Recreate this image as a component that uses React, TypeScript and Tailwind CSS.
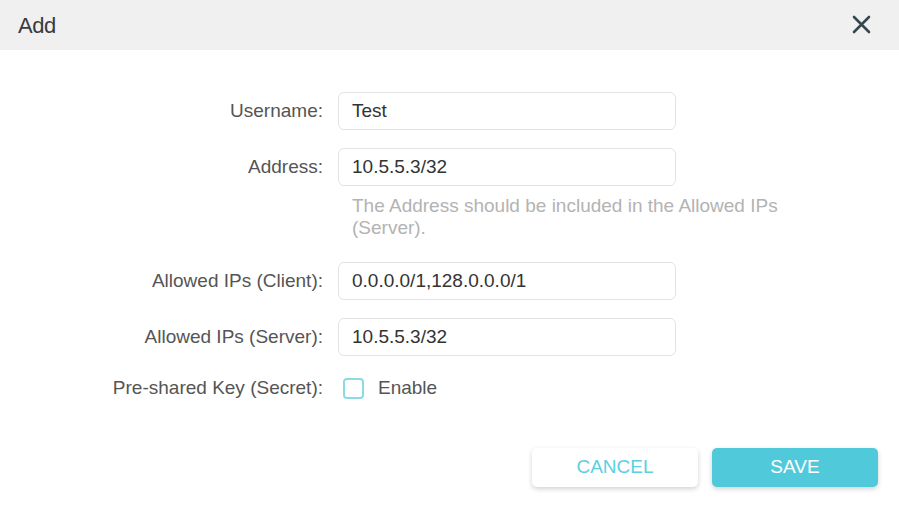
import React from "react";

const font = { fontFamily: '"Liberation Sans", Arial, sans-serif' };

function Row({ label, value }: { label: string; value: string }) {
  return (
    <div className="flex items-center h-[38px]">
      <div className="w-[323px] text-right text-[19px] text-[#555]">{label}</div>
      <div className="ml-[15px] w-[338px] h-[38px] border border-[#e3e3e3] rounded-[6px] flex items-center pl-[13px] text-[19px] text-[#333] bg-white">
        {value}
      </div>
    </div>
  );
}

export default function App() {
  return (
    <div className="w-[899px] h-[506px] bg-white overflow-hidden" style={font}>
      <div className="h-[50px] bg-[#f0f0f0] flex items-center justify-between pl-[18px] pr-[28px]">
        <span className="text-[22px] text-[#3a3a3a] tracking-[-0.5px]">Add</span>
        <svg width="19" height="19" viewBox="0 0 19 19" className="mt-[-1px]">
          <path d="M2 2 L17 17 M17 2 L2 17" stroke="#37474f" strokeWidth="2.6" strokeLinecap="round" />
        </svg>
      </div>
      <div className="pt-[42px] flex flex-col">
        <Row label="Username:" value="Test" />
        <div className="mt-[18px]">
          <Row label="Address:" value="10.5.5.3/32" />
        </div>
        <div className="ml-[352px] mt-[9px] w-[460px] text-[19px] leading-[22px] text-[#b3b3b3]">
          The Address should be included in the Allowed IPs (Server).
        </div>
        <div className="mt-[23px]">
          <Row label="Allowed IPs (Client):" value="0.0.0.0/1,128.0.0.0/1" />
        </div>
        <div className="mt-[18px]">
          <Row label="Allowed IPs (Server):" value="10.5.5.3/32" />
        </div>
        <div className="mt-[18px] flex items-center h-[28px]">
          <div className="w-[323px] text-right text-[19px] text-[#555]">Pre-shared Key (Secret):</div>
          <div className="ml-[20px] w-[21px] h-[21px] border-2 border-[#8adbe4] rounded-[4px] bg-white" />
          <span className="ml-[14px] text-[19px] text-[#555]">Enable</span>
        </div>
        <div className="mt-[46px] flex justify-end pr-[21px] gap-[14px]">
          <button className="w-[166px] h-[39px] rounded-[5px] bg-white text-[#5dcfe0] text-[19px] shadow-[0_2px_5px_rgba(0,0,0,0.18)]">
            CANCEL
          </button>
          <button className="w-[166px] h-[39px] rounded-[5px] bg-[#50cadb] text-white text-[19px] shadow-[0_2px_5px_rgba(0,0,0,0.18)]">
            SAVE
          </button>
        </div>
      </div>
    </div>
  );
}
